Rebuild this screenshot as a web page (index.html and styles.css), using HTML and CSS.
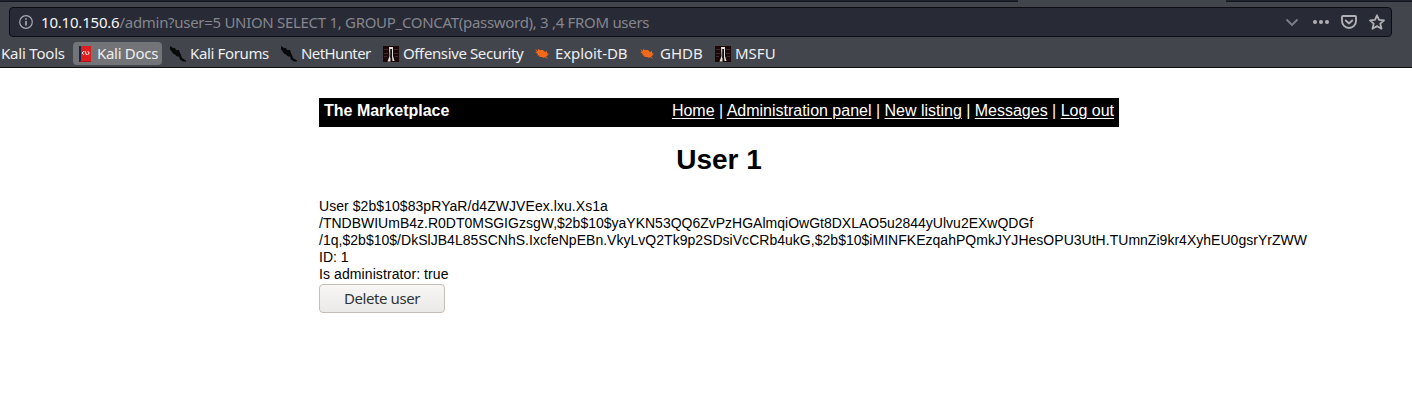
FILE: index.html
```
<!DOCTYPE html>
<html lang="en">
<head>
<meta charset="utf-8">
<title>The Marketplace</title>
<link rel="stylesheet" href="styles.css">
</head>
<body>
<svg class="defs" width="0" height="0" aria-hidden="true">
  <symbol id="dragon" viewBox="0 0 16 16"><path d="M0 0l3 2 2 0 1 2 3 0 1 3 1 2 1 3 4 2.500v1l-3 0-3-2-1-3-2 0-2-2-2-1-2-3-1-1z" fill="#08090b"/></symbol>
  <symbol id="tower" viewBox="0 0 16 16"><path fill="#1c0708" d="M0 0h16v16H0z"/><path d="M1 3.500h4M1 7.500h4M11 3.500h4M11 7.500h4M1 10.500h3M12 10.500h3" stroke="#3c2c2d"/><path d="M6 1h4v9l1.500 5H9.500L9 11 8.500 5 7.500 11v4.500H4.500L6.500 10z" fill="#e3dfdc"/><path d="M7.200 3h1.800v9H7.200z" fill="#101010"/></symbol>
  <symbol id="bug" viewBox="0 0 16 16"><path d="M0 3l3 2 0-2 2 1 3 0 2 2 2-1 0 2 2 1-2 1 1 1-2 0 2 3-3-2-1 1-2-1-3 0 1-1-3-1 1-1-3-2 2 0z" fill="#f4681a"/></symbol>
</svg>
<header class="browser">
  <div class="tabs"><div class="tabs-left"></div><div class="tab"></div><div class="tabs-right"></div></div>
  <div class="urlbar">
    <svg class="info" width="14" height="14" viewBox="0 0 14 14" fill="none" stroke="#a9aab0"><circle cx="7" cy="7" r="6.300" stroke-width="1.200"/><path d="M7 6v4.500M7 3.200v1.600" stroke-width="1.700"/></svg>
    <div class="url"><span class="host">10.10.150.6</span><span class="path">/admin?user=5 UNION SELECT 1, GROUP_CONCAT(password), 3 ,4 FROM users</span></div>
    <div class="actions">
      <svg width="14" height="16" viewBox="0 0 14 16" fill="none" stroke="#7f8088" stroke-width="1.800"><path d="M1.500 5.500L7 11l5.500-5.500"/></svg>
      <svg width="16" height="16" viewBox="0 0 16 16" fill="#b1b1b5"><circle cx="2" cy="8" r="2"/><circle cx="8" cy="8" r="2"/><circle cx="14" cy="8" r="2"/></svg>
      <svg width="16" height="16" viewBox="0 0 16 16" fill="none" stroke="#b1b1b5" stroke-width="1.900" stroke-linecap="round" stroke-linejoin="round"><path d="M2 2h12q1 0 1 1v4a7 7 0 0 1-14 0V3q0-1 1-1zM4.800 6.500L8 9.500l3.200-3"/></svg>
      <svg width="16" height="16" viewBox="0 0 16 16" fill="none" stroke="#b1b1b5" stroke-width="1.800" stroke-linejoin="round"><path d="M8 1.300l2 4.500 5 .500-3.700 3.300 1.200 5.100L8 12.100l-4.500 2.600 1.200-5.100L1 6.300l5-.500z"/></svg>
    </div>
  </div>
  <nav class="bookmarks">
    <span class="bm tools">Kali Tools</span>
    <span class="bm docs"><svg width="16" height="16" viewBox="0 0 16 16"><path fill="#162540" d="M2 0h2v16H2z"/><path fill="#df1d20" d="M4 0h10v15H4z"/><path fill="#a9151b" d="M3 15h11v1H3z"/><path d="M7 5L5.200 7 7 9M10.500 5l1.800 2-1.800 2M8 5l1.500 4" fill="none" stroke="#fff"/></svg><span>Kali Docs</span></span>
    <span class="bm forums"><svg width="16" height="16"><use href="#dragon"/></svg><span>Kali Forums</span></span>
    <span class="bm hunter"><svg width="16" height="16"><use href="#dragon"/></svg><span>NetHunter</span></span>
    <span class="bm offsec"><svg width="16" height="16"><use href="#tower"/></svg><span>Offensive Security</span></span>
    <span class="bm exploit"><svg width="16" height="16"><use href="#bug"/></svg><span>Exploit-DB</span></span>
    <span class="bm ghdb"><svg width="16" height="16"><use href="#bug"/></svg><span>GHDB</span></span>
    <span class="bm msfu"><svg width="16" height="16"><use href="#tower"/></svg><span>MSFU</span></span>
  </nav>
</header>
<main class="page">
  <div class="sitebar"><b class="brand">The Marketplace</b><div class="links"><a href="#">Home</a> | <a href="#">Administration panel</a> | <a href="#">New listing</a> | <a href="#">Messages</a> | <a href="#">Log out</a></div></div>
  <h1 class="title">User 1</h1>
  <div class="details">
    <div class="name">User $2b$10$83pRYaR/d4ZWJVEex.lxu.Xs1a</div>
    <div class="wrapped">/TNDBWIUmB4z.R0DT0MSGIGzsgW,$2b$10$yaYKN53QQ6ZvPzHGAlmqiOwGt8DXLAO5u2844yUlvu2EXwQDGf</div>
    <div class="longest">/1q,$2b$10$/DkSlJB4L85SCNhS.IxcfeNpEBn.VkyLvQ2Tk9p2SDsiVcCRb4ukG,$2b$10$iMINFKEzqahPQmkJYJHesOPU3UtH.TUmnZi9kr4XyhEU0gsrYrZWW</div>
    <div>ID: 1</div>
    <div class="admin">Is administrator: true</div>
  </div>
  <button class="delete">Delete user</button>
</main>
</body>
</html>
```
FILE: styles.css
```
* { box-sizing: border-box; }
body { margin: 0; background: #fff; color: #000; font-family: "Liberation Sans", Arial, sans-serif; overflow: hidden; }
.defs { position: absolute; }
svg { display: block; flex: none; }
.browser { height: 68px; background: #42454c; border-bottom: 1px solid #0c0c0d; font-family: "Noto Sans", sans-serif; }
.tabs { height: 2px; display: flex; }
.tabs-left { width: 1018px; background: #20232d; border-bottom: 1px solid #14161d; }
.tab { width: 208px; background: #42454c; }
.tabs-right { flex: 1; background: #20232d; border-bottom: 1px solid #14161d; }
.urlbar { height: 30px; margin: 5px 20px 0 9px; border: 1px solid #0c0c12; border-radius: 4px; background: #282a36; display: flex; align-items: center; padding: 0 6px 0 9px; }
.url { margin-left: 8px; font-size: 15px; line-height: 20px; white-space: pre; display: flex; }
.host { color: #f5f5f6; letter-spacing: -0.2px; }
.path { color: #85868d; letter-spacing: -0.3px; }
.actions { margin-left: auto; display: flex; align-items: center; }
.actions svg + svg { margin-left: 12px; }
.actions svg:nth-child(2) { margin-left: 14px; }
.bookmarks { height: 30px; display: flex; padding-top: 5px; color: #eeeeef; font-size: 15px; line-height: 23px; white-space: nowrap; }
.bm { height: 23px; display: flex; align-items: center; flex: none; gap: 4px; }
.tools { width: 73px; padding-left: 1px; letter-spacing: -0.2px; }
.docs { width: 89px; margin-right: 8px; padding-left: 4px; background: #737477; border-radius: 4px; letter-spacing: -0.3px; }
.forums { width: 111px; letter-spacing: -0.36px; }
.hunter { width: 102px; letter-spacing: -0.6px; }
.offsec { width: 152px; letter-spacing: -0.38px; }
.exploit { width: 105px; letter-spacing: -0.08px; }
.ghdb { width: 75px; }
.page { width: 800px; margin: 30px 0 0 319px; }
.sitebar { height: 29px; background: #000; color: #fff; padding: 4px 5px 0; display: flex; justify-content: space-between; font-size: 16px; line-height: 18px; white-space: nowrap; }
.links a { color: #fff; text-underline-offset: 2px; }
.links { letter-spacing: -0.01px; }
.title { font-size: 28px; line-height: 32px; margin: 17px 0 22px; text-align: center; }
.details { font-size: 14px; line-height: 17px; white-space: nowrap; }
.name { letter-spacing: 0.06px; }
.longest { letter-spacing: 0.024px; }
.admin { letter-spacing: 0.09px; }
.delete { display: block; width: 126px; height: 29px; margin-top: 1px; padding: 0 0 2px; border: 1px solid #c4beb7; border-radius: 4px; background: linear-gradient(#f7f6f5, #eceae8); color: #2e3436; font: 15px/20px "Noto Sans", sans-serif; letter-spacing: -0.4px; }
```
